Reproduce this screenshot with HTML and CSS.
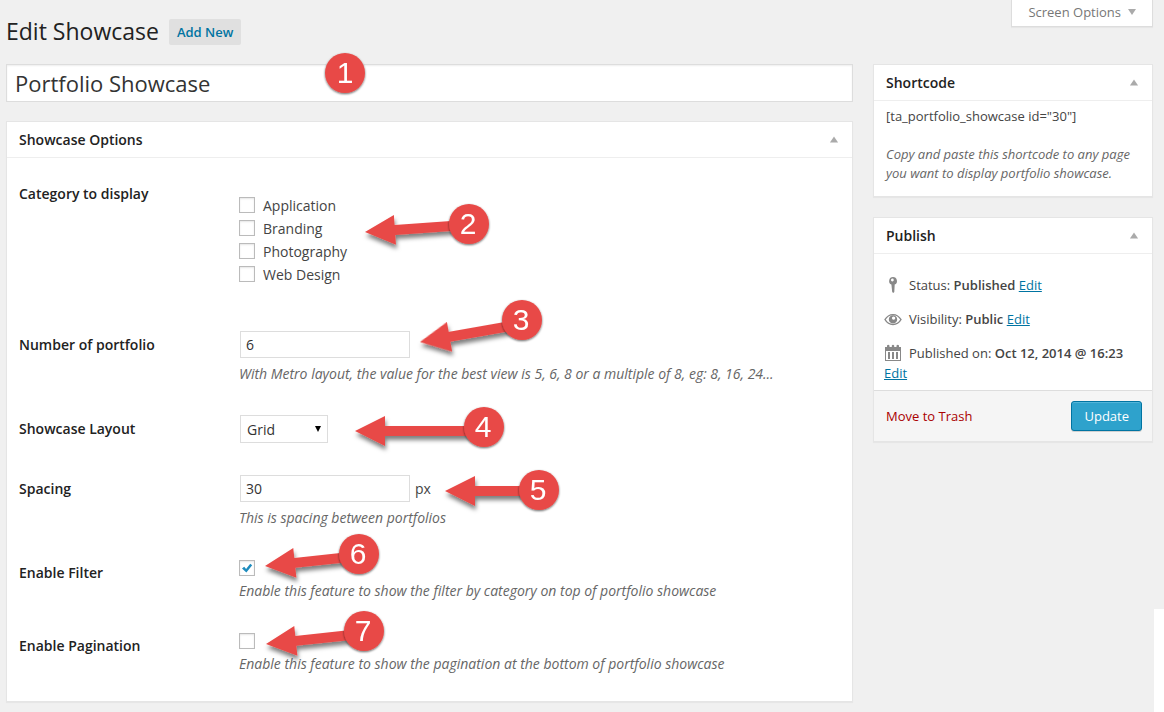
FILE: index.html
```html
<!DOCTYPE html>
<html lang="en">
<head>
<meta charset="utf-8">
<meta name="viewport" content="width=device-width, initial-scale=1">
<title>Edit Showcase</title>
<link rel="stylesheet" href="styles.css">
</head>
<body>
<main class="page">
  <header class="top">
    <h1 class="page-title">Edit Showcase</h1>
    <a class="add-new" href="#">Add New</a>
    <button class="screen-options" type="button">Screen Options <span class="caret-down"></span></button>
  </header>

  <form class="columns">
    <div class="primary">
      <input class="title-input" type="text" aria-label="Title" value="Portfolio Showcase">

      <section class="box">
        <div class="box-head">
          <h2 class="box-title">Showcase Options</h2>
          <button class="toggle" type="button" aria-label="Toggle Showcase Options"></button>
        </div>
        <div class="options">
          <div class="row row-categories" role="group" aria-labelledby="cat">
            <span class="row-label" id="cat">Category to display</span>
            <div class="field choices">
              <label class="choice"><input class="check" type="checkbox">Application</label>
              <label class="choice"><input class="check" type="checkbox">Branding</label>
              <label class="choice"><input class="check" type="checkbox">Photography</label>
              <label class="choice"><input class="check" type="checkbox">Web Design</label>
            </div>
          </div>
          <div class="row">
            <label class="row-label" for="number">Number of portfolio</label>
            <div class="field">
              <div class="control"><input class="text" id="number" type="text" value="6"></div>
              <p class="hint">With Metro layout, the value for the best view is 5, 6, 8 or a multiple of 8, eg: 8, 16, 24...</p>
            </div>
          </div>
          <div class="row">
            <label class="row-label" for="layout">Showcase Layout</label>
            <div class="field">
              <div class="control select-wrap"><select class="select" id="layout"><option>Grid</option><option>Metro</option></select></div>
            </div>
          </div>
          <div class="row">
            <label class="row-label" for="spacing">Spacing</label>
            <div class="field">
              <div class="control"><input class="text" id="spacing" type="text" value="30"><span>px</span></div>
              <p class="hint">This is spacing between portfolios</p>
            </div>
          </div>
          <div class="row">
            <label class="row-label" for="filter">Enable Filter</label>
            <div class="field">
              <div class="tick"><input class="check" id="filter" type="checkbox" checked><svg class="tick-mark" viewBox="0 0 16 16" aria-hidden="true"><path d="M3 8.400 5.200 6.800 7.100 9 11.200 3.800 13.200 5.200 7.400 12.600Z"/></svg></div>
              <p class="hint">Enable this feature to show the filter by category on top of portfolio showcase</p>
            </div>
          </div>
          <div class="row">
            <label class="row-label" for="pagination">Enable Pagination</label>
            <div class="field">
              <div class="tick"><input class="check" id="pagination" type="checkbox"></div>
              <p class="hint">Enable this feature to show the pagination at the bottom of portfolio showcase</p>
            </div>
          </div>
        </div>
      </section>
    </div>

    <aside class="side">
      <section class="box">
        <div class="box-head">
          <h2 class="box-title">Shortcode</h2>
          <button class="toggle" type="button" aria-label="Toggle Shortcode"></button>
        </div>
        <div class="shortcode">
          <p class="code">[ta_portfolio_showcase id="30"]</p>
          <p class="note">Copy and paste this shortcode to any page you want to display portfolio showcase.</p>
        </div>
      </section>

      <section class="box">
        <div class="box-head">
          <h2 class="box-title">Publish</h2>
          <button class="toggle" type="button" aria-label="Toggle Publish"></button>
        </div>
        <ul class="status">
          <li class="status-item"><svg class="icon" viewBox="0 0 20 20" aria-hidden="true"><path fill-rule="evenodd" d="M9 2a4 4 0 0 1 1.700 7.600L10.300 17 9.200 18 8.200 17 7.400 9.600A4 4 0 0 1 9 2ZM8.300 3.600a1.400 1.400 0 1 0 .1 2.800 1.400 1.400 0 0 0-.1-2.800Z"/></svg>Status: <strong>Published</strong> <a class="link" href="#">Edit</a></li>
          <li class="status-item"><svg class="icon" viewBox="0 0 20 20" aria-hidden="true"><path fill-rule="evenodd" d="M.2 10.600C2.400 7 5.400 5 9 5s6.600 2 8.800 5.600C15.600 14.200 12.600 16.200 9 16.200S2.400 14.200.2 10.600ZM1.800 10.600C3.600 13.500 6 15 9 15s5.400-1.500 7.200-4.400C14.400 7.700 12 6.200 9 6.200S3.600 7.700 1.800 10.600Z"/><path fill-rule="evenodd" d="M9 6.200a4.200 4.200 0 1 1 0 8.400 4.200 4.200 0 0 1 0-8.400ZM9.600 7.400a1.700 1.700 0 1 0 0 3.400 1.700 1.700 0 0 0 0-3.400Z"/></svg>Visibility: <strong>Public</strong> <a class="link" href="#">Edit</a></li>
          <li class="status-item"><svg class="icon" viewBox="0 0 20 20" aria-hidden="true"><path fill-rule="evenodd" d="M1 4H3V2.500Q4.200 1.200 5.500 2.500V4H7.800V2.500Q9 1.200 10.200 2.500V4H12.500V2.500Q13.800 1.200 15 2.500V4H17V18H1ZM2 8V17H16V8ZM4 9H6V16H4ZM8 9H10V16H8ZM12 9H14V16H12Z"/></svg>Published on: <strong>Oct 12, 2014 @ 16:23</strong> <a class="link" href="#">Edit</a></li>
        </ul>
        <div class="publish-foot">
          <a class="trash" href="#">Move to Trash</a>
          <button class="update" type="button">Update</button>
        </div>
      </section>
    </aside>
  </form>
</main>

<div class="edge"></div>

<svg class="callouts" viewBox="0 0 620 700" role="img" aria-label="Numbered steps 1 to 7">
  <defs>
    <filter id="soft" x="-20%" y="-60%" width="140%" height="240%">
      <feDropShadow dx="1" dy="4" stdDeviation="2" flood-color="#000" flood-opacity=".5"/>
    </filter>
    <filter id="ring" x="-30%" y="-30%" width="160%" height="160%">
      <feDropShadow dx="0" dy="1" stdDeviation="1" flood-color="#000" flood-opacity=".6"/>
    </filter>
  </defs>
  <g class="arrows" filter="url(#soft)">
    <path transform="translate(365 232) rotate(-4)" d="M0 0 30-15V-5H90V5H30V15Z"/>
    <path transform="translate(420 342) rotate(-10)" d="M0 0 30-15V-5H90V5H30V15Z"/>
    <path transform="translate(355 431)" d="M0 0 30-15V-5H120V5H30V15Z"/>
    <path transform="translate(445 491)" d="M0 0 30-15V-5H90V5H30V15Z"/>
    <path transform="translate(265 566) rotate(-6)" d="M0 0 30-15V-5H90V5H30V15Z"/>
    <path transform="translate(266 644) rotate(-6)" d="M0 0 30-15V-5H90V5H30V15Z"/>
  </g>
  <g class="discs" filter="url(#ring)">
    <circle cx="345" cy="73" r="20"/><circle cx="469" cy="224" r="20"/><circle cx="522" cy="320" r="20"/><circle cx="484" cy="427" r="20"/><circle cx="539" cy="490" r="20"/><circle cx="359" cy="554" r="20"/><circle cx="364" cy="631" r="20"/>
  </g>
  <g class="digits">
    <text x="345" y="83">1</text><text x="468" y="234">2</text><text x="521" y="330">3</text><text x="483" y="437">4</text><text x="538" y="500">5</text><text x="358" y="564">6</text><text x="363" y="641">7</text>
  </g>
</svg>
</body>
</html>
```

FILE: styles.css
```css
* { box-sizing: border-box; }

body {
  position: relative;
  margin: 0;
  min-height: 100vh;
  background: #f0f0f0;
  color: #444;
  font: 13px/19px "Open Sans", sans-serif;
}

h1, h2, p, ul { margin: 0; padding: 0; }
ul { list-style: none; }
button, input, select { font-family: inherit; }

.page { padding: 0 11px 10px 6px; }

.top {
  display: flex;
  align-items: flex-start;
  height: 64px;
}
.page-title {
  margin-top: 16px;
  color: #222;
  font-size: 23px;
  font-weight: 400;
  line-height: 30px;
}
.add-new {
  margin: 19px 0 0 10px;
  padding: 4px 8px;
  border-radius: 2px;
  background: #e0e0e0;
  color: #0074a2;
  font-weight: 600;
  line-height: 18px;
  text-decoration: none;
}
.screen-options {
  display: flex;
  align-items: center;
  gap: 7px;
  height: 27px;
  margin-left: auto;
  padding: 0 16px 2px;
  border: 1px solid #ddd;
  border-top: 0;
  background: #fff;
  box-shadow: 0 1px 1px rgba(0, 0, 0, .04);
  color: #777;
  font-size: 13px;
}
.caret-down {
  border: 4px solid transparent;
  border-top: 6px solid #aaa;
  border-bottom: 0;
}

.columns {
  display: grid;
  grid-template-columns: minmax(0, 1fr) 280px;
  align-items: start;
  gap: 20px;
}
.primary { display: grid; gap: 19px; }
.side { display: grid; gap: 20px; }

.title-input {
  width: 100%;
  height: 38px;
  padding: 0 8px;
  border: 1px solid #ddd;
  background: #fff;
  box-shadow: inset 0 1px 2px rgba(0, 0, 0, .07);
  color: #333;
  font-size: 22px;
}

.box {
  border: 1px solid #e5e5e5;
  background: #fff;
  box-shadow: 0 1px 1px rgba(0, 0, 0, .04);
}
.box-head {
  display: flex;
  align-items: center;
  justify-content: space-between;
  height: 36px;
  padding: 0 12px;
  border-bottom: 1px solid #eee;
}
.box-title {
  color: #222;
  font-size: 14px;
  font-weight: 600;
  line-height: 20px;
}
.toggle {
  width: 12px;
  height: 12px;
  padding: 0;
  border: 0;
  background: #aaa;
  clip-path: polygon(50% 25%, 84% 75%, 16% 75%);
}

.options { padding: 7px 12px 11px; }
.row {
  display: grid;
  grid-template-columns: 220px minmax(0, 1fr);
  padding: 15px 0 16px;
  font-size: 14px;
}
.row-categories { padding-bottom: 30px; }
.row-label {
  align-self: start;
  padding-top: 5px;
  color: #222;
  font-weight: 600;
  line-height: 18px;
}
.field { display: grid; gap: 4px; }
.choices { gap: 0; padding-top: 14px; }
.choice {
  display: flex;
  align-items: flex-start;
  gap: 8px;
  justify-self: start;
  line-height: 23px;
}
.check {
  appearance: none;
  width: 16px;
  height: 16px;
  margin: 0;
  border: 1px solid #bbb;
  background: #fff;
  box-shadow: inset 0 1px 2px rgba(0, 0, 0, .1);
}
.choice .check { margin-top: 3px; }
.control {
  display: flex;
  align-items: center;
  gap: 5px;
  padding: 0 0 1px 1px;
}
.text, .select {
  border: 1px solid #ddd;
  border-radius: 0;
  background: #fff;
  color: #333;
  font-size: 14px;
}
.text {
  width: 170px;
  height: 27px;
  padding: 0 5px;
}
.select {
  appearance: none;
  width: 88px;
  height: 28px;
  padding: 0 6px;
}
.select-wrap { position: relative; justify-self: start; }
.select-wrap::after {
  position: absolute;
  top: 11px;
  right: 7px;
  border: 3px solid transparent;
  border-top: 6px solid #000;
  border-bottom: 0;
  content: "";
  pointer-events: none;
}
.tick { position: relative; display: flex; height: 17px; align-items: center; }
.tick-mark {
  position: absolute;
  left: 0;
  width: 16px;
  height: 16px;
  fill: #1e8cbe;
  pointer-events: none;
}
.hint {
  color: #666;
  font-style: italic;
  line-height: 21px;
}

.shortcode {
  display: grid;
  gap: 19px;
  padding: 6px 12px 13px;
}
.note { color: #666; font-style: italic; }

.status { padding-top: 14px; }
.status-item { padding: 7px 10px; line-height: 20px; }
.status-item strong { font-weight: 600; }
.icon {
  width: 20px;
  height: 20px;
  margin-right: 5px;
  fill: #888;
  vertical-align: top;
}
.link { color: #0074a2; }

.publish-foot {
  display: flex;
  align-items: center;
  justify-content: space-between;
  height: 51px;
  padding: 0 10px 0 12px;
  border-top: 1px solid #ddd;
  background: #f5f5f5;
}
.trash { color: #a00; text-decoration: none; }
.update {
  height: 30px;
  padding: 0 12px;
  border: 1px solid #0074a2;
  border-radius: 3px;
  background: #2ea2cc;
  box-shadow: inset 0 1px 0 rgba(120, 200, 230, .5), 0 1px 0 rgba(0, 0, 0, .15);
  color: #fff;
  font-size: 13px;
}

.edge {
  position: absolute;
  top: 609px;
  right: 0;
  bottom: 0;
  width: 10px;
  background: #fff;
}

.callouts {
  position: absolute;
  top: 0;
  left: 0;
  width: 620px;
  height: 700px;
  pointer-events: none;
}
.arrows, .discs { fill: #e84a47; }
.digits {
  fill: #fff;
  font: 30px "Liberation Sans", sans-serif;
  text-anchor: middle;
}
```
